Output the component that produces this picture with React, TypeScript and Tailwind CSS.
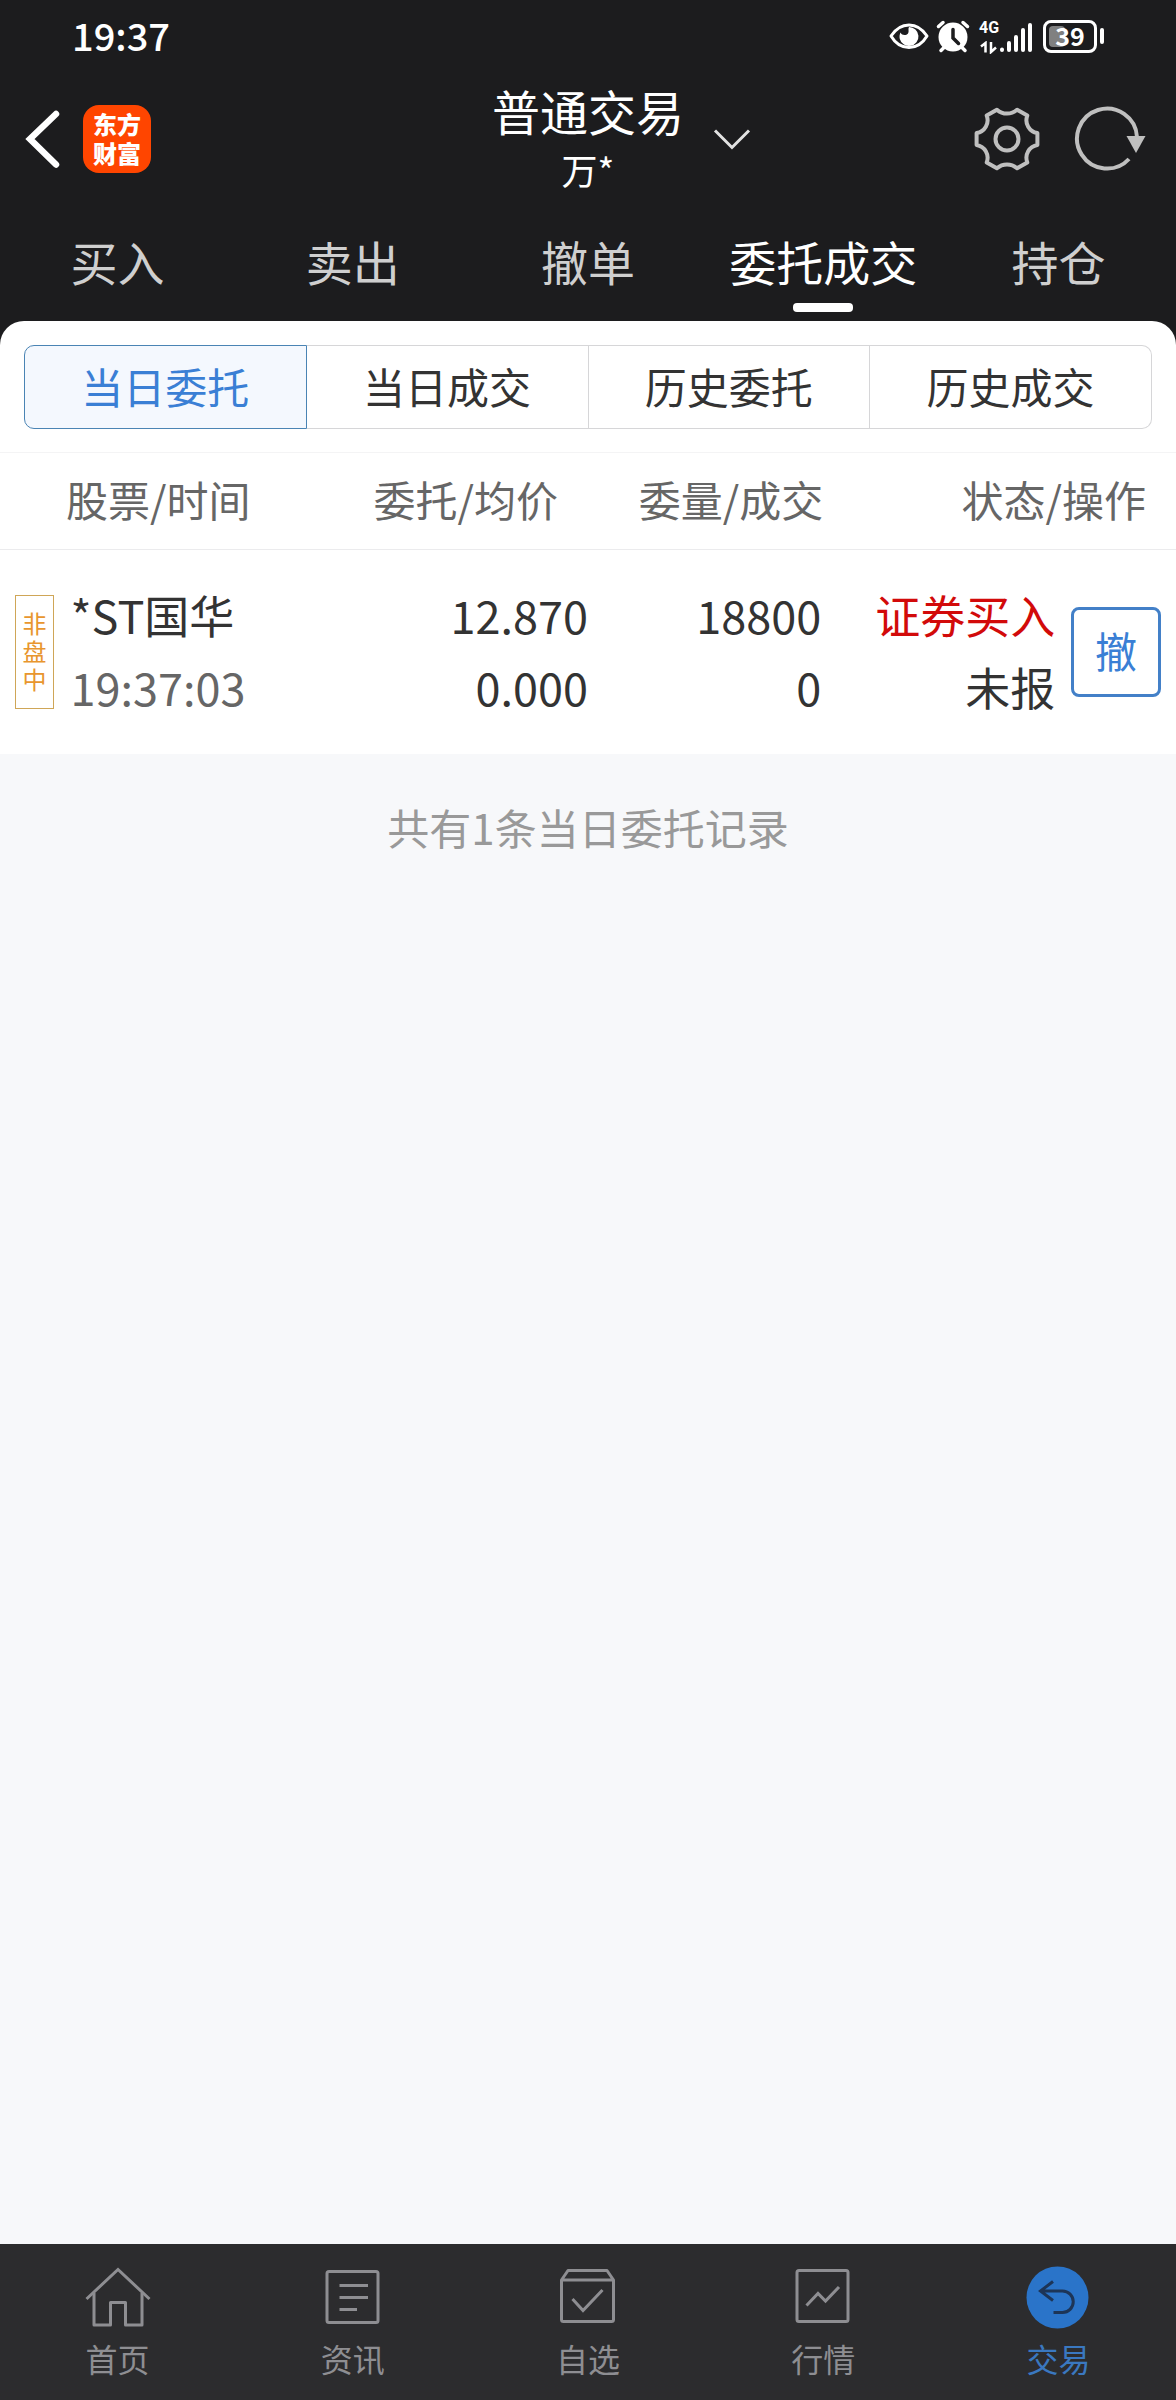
import React from "react";

const tabs = ["买入", "卖出", "撤单", "委托成交", "持仓"];
const activeTab = "委托成交";

const segments = ["当日委托", "当日成交", "历史委托", "历史成交"];
const activeSegment = "当日委托";

function StatusBar() {
  return (
    <div className="flex h-[72px] items-center justify-between pl-[72px] pr-[72px]">
      <span className="pb-[2px] text-[38px] font-medium leading-none text-white">19:37</span>
      <div className="flex items-center text-white">
        <svg width="40" height="36" viewBox="0 0 40 36" fill="none" aria-label="护眼模式">
          <path
            d="M2 18C7 10.500 13 7 20 7s13 3.500 18 11C33 26.500 27 29.500 20 29.500S7 26.500 2 18Z"
            stroke="currentColor"
            strokeWidth="3"
            strokeLinejoin="round"
          />
          <path
            d="M20 9a9.500 9.500 0 1 1-9.200 12c-.6-2.500-.2-4.500.7-6.500 1 1.800 2.200 2.500 4 2.500 3 0 4.500-2 4-5-.1-1-.1-2 .5-3Z"
            fill="currentColor"
          />
        </svg>
        <svg className="ml-[6px]" width="36" height="36" viewBox="0 0 36 36" fill="none" aria-label="闹钟">
          <circle cx="18" cy="19" r="14.500" fill="currentColor" />
          <path
            d="M3.500 8.500 8 4.500M32.500 8.500 28 4.500M6 32.500l5-5M30 32.500l-5-5"
            stroke="currentColor"
            strokeWidth="3.500"
            strokeLinecap="round"
          />
          <path d="M18 11.500v8.500l5.500 5.500" stroke="#1c1c1e" strokeWidth="3.500" strokeLinecap="round" />
        </svg>
        <div className="ml-2 flex items-end">
          <div className="flex h-9 w-[20px] flex-col items-center justify-between">
            <span className="font-['Roboto',sans-serif] text-[16px] font-bold leading-[20px]">4G</span>
            <svg width="18" height="13" viewBox="0 0 18 13" fill="none" aria-hidden="true">
              <path d="M1 5.500 5.500 2V11.500M11 1V11L16 6.500" stroke="currentColor" strokeWidth="2.500" />
            </svg>
          </div>
          <svg width="36" height="36" viewBox="18 0 36 36" fill="none" aria-label="信号">
            <path
              d="M21 32V31.500M28 32V25M35 32V19M42 32V12M49 32V7"
              stroke="currentColor"
              strokeWidth="4"
              strokeLinecap="round"
            />
          </svg>
        </div>
        <div className="ml-2 flex items-center gap-[3px]">
          <div className="relative flex h-[33px] w-[54px] items-center justify-center rounded-lg border-[3px] border-white">
            <span className="absolute left-[3px] top-[3px] h-[21px] w-4 rounded-sm bg-[#808080]" />
            <span className="relative pb-[2px] text-[25px] font-bold leading-none">39</span>
          </div>
          <span className="h-4 w-1 rounded-sm bg-white" />
        </div>
      </div>
    </div>
  );
}

function TitleBar() {
  return (
    <div className="grid h-[134px] grid-cols-3 items-center">
      <div className="flex items-center pl-6">
        <button type="button" aria-label="返回">
          <svg width="40" height="64" viewBox="0 0 40 64" fill="none">
            <path d="M32 7 6 32 32 57.500" stroke="#fff" strokeWidth="6.500" strokeLinecap="round" />
          </svg>
        </button>
        <a
          href="#home"
          className="ml-[19px] flex h-[68px] w-[68px] items-center justify-center rounded-2xl bg-[#ff4500] pb-[3px] text-center text-[24px] font-black leading-[29px] text-white"
        >
          东方
          <br />
          财富
        </a>
      </div>
      <button type="button" className="relative justify-self-center text-center text-white">
        <span className="block text-[48px] leading-[60px]">普通交易</span>
        <span className="block text-[36px] leading-[58px]">万*</span>
        <svg
          className="absolute -right-[69px] top-[47px]"
          width="42"
          height="24"
          viewBox="0 0 42 24"
          fill="none"
          aria-hidden="true"
        >
          <path d="M4 3.500 21 20.500 38 3.500" stroke="#e2e2e2" strokeWidth="3" />
        </svg>
      </button>
      <div className="flex items-center justify-end gap-8 pr-[25px] text-[#bfbfbf]">
        <button type="button" aria-label="设置">
          <svg width="68" height="68" viewBox="-34 -34 68 68" fill="none" stroke="currentColor" strokeWidth="4">
            <path
              strokeLinejoin="round"
              d="M-10.100-29.300A15 15 0 0 0 10.100-29.300L20.300-23.400A13 13 0 0 0 30.400-5.900V5.900A13 13 0 0 0 20.300 23.400L10.100 29.300A15 15 0 0 0-10.100 29.300L-20.300 23.400A13 13 0 0 0-30.400 5.900V-5.900A13 13 0 0 0-20.300-23.400Z"
            />
            <circle r="11.500" />
          </svg>
        </button>
        <button type="button" aria-label="刷新">
          <svg width="78" height="68" viewBox="-34 -34 78 68" fill="none">
            <path d="M30-2A30 30 0 1 0 22 20" stroke="currentColor" strokeWidth="4" />
            <path d="M19.500-3h19L29 14Z" fill="currentColor" />
          </svg>
        </button>
      </div>
    </div>
  );
}

function MainTabs() {
  return (
    <nav className="grid h-[115px] grid-cols-5">
      {tabs.map((t) => (
        <button
          key={t}
          type="button"
          className={
            "relative pb-[5px] text-[47px] leading-[60px] " + (t === activeTab ? "text-white" : "text-[#cfcfcf]")
          }
        >
          {t}
          {t === activeTab && (
            <span className="absolute bottom-[9px] left-1/2 h-[9px] w-[60px] -translate-x-1/2 rounded bg-white" />
          )}
        </button>
      ))}
    </nav>
  );
}

function Segments() {
  return (
    <div className="px-6 pb-[23px] pt-6">
      <div className="flex h-[84px]">
        {segments.map((s) => (
          <button
            key={s}
            type="button"
            className={
              "flex-1 border pb-1 text-[42px] first:rounded-l-[10px] last:rounded-r-[10px] " +
              (s === activeSegment
                ? "border-[#4a84b4] bg-[#f4f8fe] text-[#3a7fd5]"
                : "border-l-0 border-[#d6d6d8] text-[#333]")
            }
          >
            {s}
          </button>
        ))}
      </div>
    </div>
  );
}

function Orders() {
  return (
    <table className="w-full table-fixed border-collapse">
      <colgroup>
        <col className="w-[6%]" />
        <col className="w-[22%]" />
        <col className="w-[22%]" />
        <col className="w-[20%]" />
        <col className="w-[20%]" />
        <col className="w-[10%]" />
      </colgroup>
      <thead>
        <tr className="h-[97px] border-b border-t border-b-[#ebebed] border-t-[#f4f4f5] text-[42px] leading-[60px] text-[#666]">
          <th scope="col" colSpan={2} className="pb-1 pl-[66px] text-left font-normal">
            股票/时间
          </th>
          <th scope="col" className="pb-1 pr-[30px] text-right font-normal">
            委托/均价
          </th>
          <th scope="col" className="pb-1 text-right font-normal">
            委量/成交
          </th>
          <th scope="col" colSpan={2} className="pb-1 pr-[30px] text-right font-normal">
            状态/操作
          </th>
        </tr>
      </thead>
      <tbody>
        <tr className="h-[204px] text-[45px] leading-[72px] text-[#333]">
          <td className="pl-[15px]">
            <div className="flex h-[114px] w-[39px] flex-col items-center justify-center border border-[#cfa657] pb-[2px] text-[24px] leading-[28px] text-[#e8962e]">
              <span>非</span>
              <span>盘</span>
              <span>中</span>
            </div>
          </td>
          <td className="whitespace-nowrap pb-[2px]">
            *ST国华
            <div className="text-[#666]">19:37:03</div>
          </td>
          <td className="pb-[2px] text-right">
            12.870<div>0.000</div>
          </td>
          <td className="pb-[2px] pr-[2px] text-right">
            18800<div>0</div>
          </td>
          <td className="pb-[2px] pr-[3px] text-right">
            <span className="text-[#d20a0a]">证券买入</span>
            <div>未报</div>
          </td>
          <td className="pr-[15px]">
            <button
              type="button"
              className="ml-auto flex h-[90px] w-[90px] items-center justify-center rounded-lg border-[3px] border-[#4380c8] pb-1 text-[42px] leading-none text-[#3a7fd5]"
            >
              撤
            </button>
          </td>
        </tr>
      </tbody>
    </table>
  );
}

const navItems = [
  {
    label: "首页",
    icon: (
      <>
        <path d="M4.500 39 36 9.500 67.500 39" />
        <path d="M12 33V65H28.500V42.500H43.500V65H60V33" strokeLinejoin="round" />
      </>
    ),
  },
  {
    label: "资讯",
    icon: (
      <>
        <rect x="10" y="11.500" width="51" height="51" rx="2" />
        <path d="M22.500 25.500H51M22.500 37.500H51M22.500 49.500H40" />
      </>
    ),
  },
  {
    label: "自选",
    icon: (
      <>
        <path
          d="M9.500 20 16 10.500H55L61.500 20V59.500a2 2 0 0 1-2 2H11.500a2 2 0 0 1-2-2ZM9.500 20H61.500"
          strokeLinejoin="round"
        />
        <path d="M20.500 39 31 50.500 50.500 30" />
      </>
    ),
  },
  {
    label: "行情",
    icon: (
      <>
        <rect x="10" y="10.500" width="51" height="51" rx="2" />
        <path d="M19.500 45.500 31 33.500 38.500 41 52 27" />
      </>
    ),
  },
  {
    label: "交易",
    icon: (
      <>
        <circle cx="35.500" cy="37.500" r="31" fill="#2a74c9" stroke="none" />
        <path
          d="M31 21.500 18.500 31 31 40.500M18.500 31H40.500a10.750 10.750 0 0 1 0 21.500H31.500"
          stroke="#1d3557"
        />
      </>
    ),
  },
];

function BottomNav() {
  return (
    <nav className="grid h-[156px] grid-cols-5 bg-[#2c2c2e]">
      {navItems.map((n) => (
        <a
          key={n.label}
          href={"#" + n.label}
          className={
            "flex flex-col items-center pt-4 text-[32px] leading-[52px] " +
            (n.label === "交易" ? "text-[#3a78c0]" : "text-[#8e8e92]")
          }
        >
          <svg
            width="72"
            height="72"
            viewBox="0 0 72 72"
            fill="none"
            stroke="currentColor"
            strokeWidth="3"
            aria-hidden="true"
          >
            {n.icon}
          </svg>
          {n.label}
        </a>
      ))}
    </nav>
  );
}

export default function App() {
  return (
    <div className="flex min-h-screen flex-col bg-[#f7f8fa] font-['Noto_Sans_CJK_SC',sans-serif]">
      <header className="bg-[#1c1c1e]">
        <StatusBar />
        <TitleBar />
        <MainTabs />
      </header>
      <main className="flex-1">
        <div className="bg-[#1c1c1e]">
          <section className="rounded-t-3xl bg-white">
            <Segments />
            <Orders />
          </section>
        </div>
        <p className="pt-[42px] text-center text-[42px] leading-[62px] text-[#999]">共有1条当日委托记录</p>
      </main>
      <BottomNav />
    </div>
  );
}
